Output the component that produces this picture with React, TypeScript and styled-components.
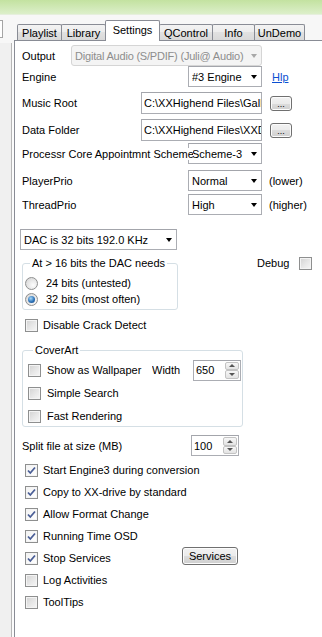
import React from "react";
import styled, { createGlobalStyle } from "styled-components";

const GlobalStyle = createGlobalStyle`
  html, body {
    margin: 0;
    padding: 0;
    background: #f0f0f0;
  }
  body {
    font-family: "Liberation Sans", Arial, sans-serif;
    font-size: 11px;
    color: #000;
  }
  * {
    box-sizing: border-box;
  }
`;

const Page = styled.div`
  width: 322px;
  height: 637px;
  overflow: hidden;
  display: flex;
  flex-direction: column;
`;

const TitleStrip = styled.div`
  flex: none;
  height: 15px;
  background: linear-gradient(#c3e2a0, #dcefca);
  border-bottom: 1px solid #e6efdd;
`;

const Body = styled.div`
  flex: 1;
  display: flex;
  background: #f7f7f7;
  min-height: 0;
`;

const LeftCol = styled.div`
  flex: none;
  width: 14px;
  display: flex;
  flex-direction: column;
`;

const Stub = styled.div`
  margin-top: 5px;
  width: 3px;
  height: 18px;
  background: #fff;
  border: 1px solid #a5a5a5;
  border-left: none;
`;

const Rail = styled.div`
  margin-top: 5px;
  flex: 1;
  width: 12px;
  background: #f0f0f0;
  border-right: 1px solid #b6b6b6;
  box-shadow: 2px 0 0 #fcfcfc;
`;

const Main = styled.div`
  flex: 1;
  min-width: 0;
  display: flex;
  flex-direction: column;
`;

const TabBar = styled.div`
  flex: none;
  height: 25px;
  display: flex;
  align-items: flex-end;
  padding-left: 3px;
`;

const Tab = styled.div<{ $w: number; $active?: boolean }>`
  position: relative;
  z-index: ${(p) => (p.$active ? 2 : 0)};
  width: ${(p) => p.$w}px;
  height: ${(p) => (p.$active ? 21 : 16)}px;
  margin-bottom: ${(p) => (p.$active ? -1 : 0)}px;
  padding-top: ${(p) => (p.$active ? 2 : 1)}px;
  border: 1px solid #898c95;
  border-bottom: none;
  border-radius: 2px 2px 0 0;
  background: ${(p) =>
    p.$active
      ? "#fff"
      : "linear-gradient(#f3f3f3 0%, #ececec 50%, #e1e1e1 50%, #d9d9d9 100%)"};
  text-align: center;
  line-height: 14px;
  white-space: nowrap;
  & + & {
    margin-left: -1px;
  }
`;

const Panel = styled.div`
  flex: 1;
  background: #fff;
  border-top: 1px solid #898c95;
  border-left: 1px solid #898c95;
  padding-left: 7px;
  display: flex;
  flex-direction: column;
`;

const Row = styled.div<{ $mt?: number; $h?: number; $ml?: number }>`
  flex: none;
  display: flex;
  align-items: center;
  margin-top: ${(p) => p.$mt ?? 0}px;
  margin-left: ${(p) => p.$ml ?? 0}px;
  height: ${(p) => (p.$h ? `${p.$h}px` : "auto")};
`;

const TopRow = styled.div<{ $mt?: number }>`
  flex: none;
  display: flex;
  align-items: flex-start;
  margin-top: ${(p) => p.$mt ?? 0}px;
`;

const Label = styled.span<{ $w?: number; $over?: boolean }>`
  flex: none;
  width: ${(p) => (p.$w ? `${p.$w}px` : "auto")};
  white-space: nowrap;
  overflow: hidden;
  ${(p) =>
    p.$over &&
    `
    position: relative;
    z-index: 1;
    background: #fff;
  `}
`;

const Combo = styled.div<{ $w: number; $disabled?: boolean; $ml?: number }>`
  flex: none;
  width: ${(p) => p.$w}px;
  height: 21px;
  margin-left: ${(p) => p.$ml ?? 0}px;
  display: flex;
  align-items: center;
  padding-left: 3px;
  border: 1px solid ${(p) => (p.$disabled ? "#d5d5d5" : "#abadb3")};
  border-top-color: ${(p) => (p.$disabled ? "#d5d5d5" : "#a3a5ab")};
  border-radius: ${(p) => (p.$disabled ? 3 : 0)}px;
  background: ${(p) => (p.$disabled ? "#f4f4f4" : "#fff")};
  color: ${(p) => (p.$disabled ? "#8d8d8d" : "#000")};
  letter-spacing: ${(p) => (p.$disabled ? "-0.2px" : "normal")};
  overflow: hidden;
`;

const ComboText = styled.span`
  flex: 1;
  min-width: 0;
  white-space: nowrap;
  overflow: hidden;
`;

const Arrow = styled.span<{ $disabled?: boolean }>`
  flex: none;
  width: 0;
  height: 0;
  margin: 1px 4px 0 4px;
  border-left: 3.5px solid transparent;
  border-right: 3.5px solid transparent;
  border-top: 4px solid ${(p) => (p.$disabled ? "#a8a8a8" : "#000")};
`;

const TextField = styled.div`
  flex: none;
  width: 121px;
  height: 22px;
  display: flex;
  align-items: center;
  padding-left: 2px;
  border: 1px solid #abadb3;
  border-top-color: #a3a5ab;
  overflow: hidden;
`;

const FieldText = styled.span`
  white-space: nowrap;
  overflow: hidden;
  min-width: 0;
`;

const Button = styled.div<{ $w: number; $h: number; $ml?: number; $top?: boolean }>`
  flex: none;
  align-self: ${(p) => (p.$top ? "flex-start" : "center")};
  width: ${(p) => p.$w}px;
  height: ${(p) => p.$h}px;
  margin-left: ${(p) => p.$ml ?? 0}px;
  display: flex;
  align-items: center;
  justify-content: center;
  border: 1px solid #707070;
  border-radius: 3px;
  background: linear-gradient(#f2f2f2 0%, #ebebeb 50%, #dddddd 50%, #cfcfcf 100%);
  box-shadow: inset 0 0 0 1px #fcfcfc;
  white-space: nowrap;
`;

const Dots = styled.span`
  font-size: 9px;
  line-height: 9px;
  margin-top: 2px;
`;

const Link = styled.span`
  margin-left: 10px;
  color: #0b4fd1;
  text-decoration: underline;
`;

const Note = styled.span`
  margin-left: 7px;
  white-space: nowrap;
`;

const Group = styled.fieldset<{ $w: number; $pl: number }>`
  flex: none;
  width: ${(p) => p.$w}px;
  margin: 0;
  padding: 0 0 0 ${(p) => p.$pl}px;
  border: 1px solid #d5dfe5;
  border-radius: 3px;
  min-width: 0;
`;

const Legend = styled.legend`
  margin-left: 5px;
  padding: 0 2px;
  line-height: 14px;
  white-space: nowrap;
`;

const GroupBody = styled.div<{ $pt: number; $pb: number; $gap: number }>`
  display: flex;
  flex-direction: column;
  gap: ${(p) => p.$gap}px;
  padding: ${(p) => p.$pt}px 0 ${(p) => p.$pb}px 0;
`;

const Box = styled.span<{ $checked?: boolean }>`
  flex: none;
  width: 13px;
  height: 13px;
  border: 1px solid #8e8f8f;
  background: ${(p) =>
    p.$checked
      ? "linear-gradient(135deg, #f2f2f2, #ffffff)"
      : "linear-gradient(135deg, #d2d2d2 0%, #e6e6e6 50%, #f7f7f7 100%)"};
  box-shadow: inset 0 0 0 1px #f4f4f4;
  display: flex;
  align-items: center;
  justify-content: center;
`;

const Radio = styled.span`
  flex: none;
  width: 13px;
  height: 13px;
  border-radius: 50%;
  border: 1px solid #8e8f8f;
  background: radial-gradient(circle at 65% 65%, #fdfdfd, #d0d0d0);
  display: flex;
  align-items: center;
  justify-content: center;
`;

const RadioDot = styled.span`
  width: 7px;
  height: 7px;
  border-radius: 50%;
  background: radial-gradient(circle at 40% 35%, #a8d8f8 0%, #2d73b8 55%, #0f3d78 100%);
`;

const Slot = styled.span<{ $gap: number; $w?: number }>`
  flex: none;
  display: flex;
  margin-left: ${(p) => p.$gap}px;
  width: ${(p) => (p.$w ? `${p.$w}px` : "auto")};
  white-space: nowrap;
`;

const Spin = styled.div`
  flex: none;
  width: 48px;
  height: 21px;
  display: flex;
  border: 1px solid #abadb3;
  border-top-color: #a3a5ab;
`;

const SpinText = styled.span`
  flex: 1;
  display: flex;
  align-items: center;
  padding-left: 2px;
`;

const SpinButtons = styled.div`
  flex: none;
  width: 15px;
  display: flex;
  flex-direction: column;
  padding: 1px 1px 1px 0;
`;

const SpinBtn = styled.div<{ $up?: boolean }>`
  flex: 1;
  display: flex;
  align-items: center;
  justify-content: center;
  border: 1px solid #c3c3c3;
  border-radius: 2px;
  background: linear-gradient(#f7f7f7, #e3e3e3);
  &::after {
    content: "";
    width: 0;
    height: 0;
    border-left: 3px solid transparent;
    border-right: 3px solid transparent;
    ${(p) =>
      p.$up ? "border-bottom: 3px solid #555;" : "border-top: 3px solid #555;"}
  }
`;

function Check({ checked }: { checked?: boolean }) {
  return (
    <Box $checked={checked}>
      {checked && (
        <svg width="11" height="11" viewBox="0 0 11 11">
          <path
            d="M2 5.5 L4.3 8 L9 2.5"
            fill="none"
            stroke="#4a5e96"
            strokeWidth="1.8"
          />
        </svg>
      )}
    </Box>
  );
}

function SpinBox({ value }: { value: string }) {
  return (
    <Spin>
      <SpinText>{value}</SpinText>
      <SpinButtons>
        <SpinBtn $up />
        <SpinBtn />
      </SpinButtons>
    </Spin>
  );
}

const tabs = [
  { name: "Playlist", w: 45 },
  { name: "Library", w: 45 },
  { name: "Settings", w: 55, active: true },
  { name: "QControl", w: 54 },
  { name: "Info", w: 43 },
  { name: "UnDemo", w: 51 },
];

const options = [
  { label: "Start Engine3 during conversion", checked: true },
  { label: "Copy to XX-drive by standard", checked: true },
  { label: "Allow Format Change", checked: true },
  { label: "Running Time OSD", checked: true },
  { label: "Stop Services", checked: true, button: "Services" },
  { label: "Log Activities", checked: false },
  { label: "ToolTips", checked: false },
];

export default function App() {
  return (
    <>
      <GlobalStyle />
      <Page>
        <TitleStrip />
        <Body>
          <LeftCol>
            <Stub />
            <Rail />
          </LeftCol>
          <Main>
            <TabBar>
              {tabs.map((t) => (
                <Tab key={t.name} $w={t.w} $active={t.active}>
                  {t.name}
                </Tab>
              ))}
            </TabBar>
            <Panel>
              <Row $mt={4} $h={21}>
                <Label $w={49}>Output</Label>
                <Combo $w={191} $disabled>
                  <ComboText>Digital Audio (S/PDIF) (Juli@ Audio)</ComboText>
                  <Arrow $disabled />
                </Combo>
              </Row>
              <Row $h={21}>
                <Label $w={166}>Engine</Label>
                <Combo $w={74}>
                  <ComboText>#3 Engine</ComboText>
                  <Arrow />
                </Combo>
                <Link>Hlp</Link>
              </Row>
              <Row $mt={5} $h={22}>
                <Label $w={119}>Music Root</Label>
                <TextField>
                  <FieldText>C:\XXHighend Files\Gallery</FieldText>
                </TextField>
                <Button $w={22} $h={15} $ml={8}>
                  <Dots>...</Dots>
                </Button>
              </Row>
              <Row $mt={5} $h={22}>
                <Label $w={119}>Data Folder</Label>
                <TextField>
                  <FieldText>C:\XXHighend Files\XXData</FieldText>
                </TextField>
                <Button $w={22} $h={15} $ml={8}>
                  <Dots>...</Dots>
                </Button>
              </Row>
              <Row $mt={2} $h={21}>
                <Label $w={171} $over>
                  Processr Core Appointmnt Scheme
                </Label>
                <Combo $w={74} $ml={-5}>
                  <ComboText>Scheme-3</ComboText>
                  <Arrow />
                </Combo>
              </Row>
              <Row $mt={6} $h={21}>
                <Label $w={166}>PlayerPrio</Label>
                <Combo $w={74}>
                  <ComboText>Normal</ComboText>
                  <Arrow />
                </Combo>
                <Note>(lower)</Note>
              </Row>
              <Row $mt={3} $h={21}>
                <Label $w={166}>ThreadPrio</Label>
                <Combo $w={74}>
                  <ComboText>High</ComboText>
                  <Arrow />
                </Combo>
                <Note>(higher)</Note>
              </Row>
              <Row $mt={14} $h={21}>
                <Combo $w={157} $ml={-2}>
                  <ComboText>DAC is 32 bits 192.0 KHz</ComboText>
                  <Arrow />
                </Combo>
              </Row>
              <TopRow $mt={6}>
                <Group $w={156} $pl={2}>
                  <Legend>At &gt; 16 bits the DAC needs</Legend>
                  <GroupBody $pt={5} $pb={2} $gap={0}>
                    <Row $h={16}>
                      <Radio />
                      <Slot $gap={8}>24 bits (untested)</Slot>
                    </Row>
                    <Row $h={16}>
                      <Radio>
                        <RadioDot />
                      </Radio>
                      <Slot $gap={8}>32 bits (most often)</Slot>
                    </Row>
                  </GroupBody>
                </Group>
                <Row $h={14} $ml={79}>
                  <span>Debug</span>
                  <Slot $gap={10}>
                    <Check />
                  </Slot>
                </Row>
              </TopRow>
              <Row $mt={7} $h={16}>
                <Slot $gap={3}>
                  <Check />
                </Slot>
                <Slot $gap={5}>Disable Crack Detect</Slot>
              </Row>
              <TopRow $mt={10}>
                <Group $w={221} $pl={5}>
                  <Legend>CoverArt</Legend>
                  <GroupBody $pt={3} $pb={0} $gap={3}>
                    <Row $h={20}>
                      <Check />
                      <Slot $gap={6} $w={105}>
                        Show as Wallpaper
                      </Slot>
                      <Label $w={41}>Width</Label>
                      <SpinBox value="650" />
                    </Row>
                    <Row $h={20}>
                      <Check />
                      <Slot $gap={6}>Simple Search</Slot>
                    </Row>
                    <Row $h={20}>
                      <Check />
                      <Slot $gap={6}>Fast Rendering</Slot>
                    </Row>
                  </GroupBody>
                </Group>
              </TopRow>
              <Row $mt={8} $h={21}>
                <Label $w={169}>Split file at size (MB)</Label>
                <SpinBox value="100" />
              </Row>
              <Row $mt={3} />
              {options.map((o) => (
                <Row key={o.label} $h={22}>
                  <Slot $gap={3}>
                    <Check checked={o.checked} />
                  </Slot>
                  <Slot $gap={5} $w={o.button ? 139 : undefined}>
                    {o.label}
                  </Slot>
                  {o.button && (
                    <Button $w={56} $h={18} $top>
                      {o.button}
                    </Button>
                  )}
                </Row>
              ))}
            </Panel>
          </Main>
        </Body>
      </Page>
    </>
  );
}
